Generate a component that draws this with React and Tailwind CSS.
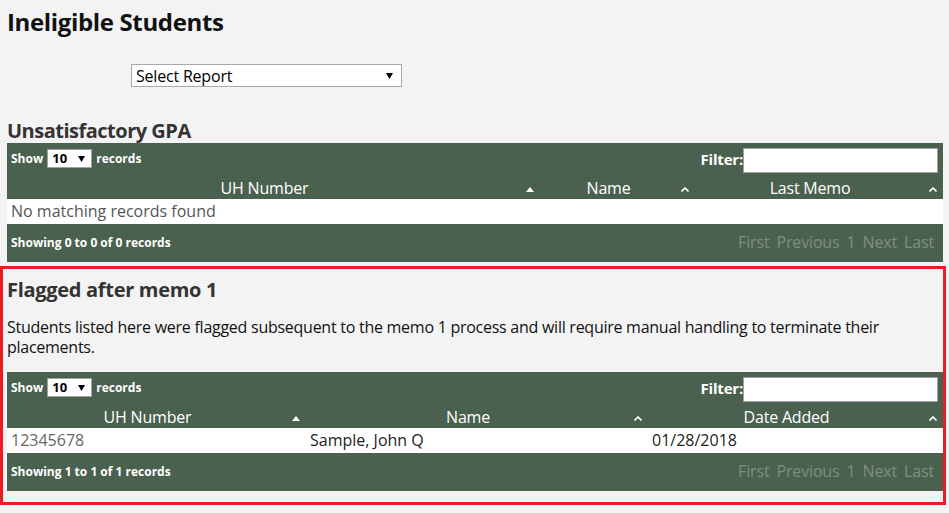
import React from "react";

const GREEN = "bg-[#4b6150]";

// --- small drawings ---
function SortUp() {
    return (
        <svg width="8" height="5" viewBox="0 0 8 5" className="block">
            <path d="M0 5 L4 0 L8 5 Z" fill="#fff" />
        </svg>
    );
}

function SortBoth() {
    return (
        <svg width="8" height="5" viewBox="0 0 8 5" className="block">
            <path d="M0.5 4.5 L4 1 L7.5 4.5" fill="none" stroke="#fff" strokeWidth="1.6" />
        </svg>
    );
}

function DownArrow() {
    return (
        <svg width="7" height="6" viewBox="0 0 7 6" className="block">
            <path d="M0 0 L7 0 L3.5 6 Z" fill="#000" />
        </svg>
    );
}

// --- Data table block ---
function DataTable({ cols, template, rows, empty, info }) {
    return (
        <div className={`${GREEN} w-[936px] text-white`}>
            {/* toolbar */}
            <div className="h-[34px] flex items-start justify-between pl-[4px] pr-[5px]">
                <div className="flex items-center gap-[4px] h-[31px] text-[12px] font-bold">
                    <span>Show</span>
                    <div className="w-[45px] h-[19px] bg-white border border-[#a0a0a0] text-black flex items-center justify-between pl-[4px] pr-[6px] text-[13px] font-bold">
                        <span>10</span>
                        <DownArrow />
                    </div>
                    <span>records</span>
                </div>
                <div className="flex items-center h-[34px] pt-[1px]">
                    <span className="text-[15px] font-bold tracking-[-0.2px] -translate-y-[1px]">Filter:</span>
                    <div className="w-[195px] h-[25px] bg-white border border-[#a0a0a0]" />
                </div>
            </div>

            {/* header */}
            <div className="grid h-[22px]" style={{ gridTemplateColumns: template }}>
                {cols.map((c, i) => (
                    <div key={c} className="relative flex items-center justify-center pr-[18px] text-[16px] leading-[22px] tracking-[-0.2px]">
                        <span>{c}</span>
                        <span className="absolute right-[6px] top-[10px]">
                            {i === 0 ? <SortUp /> : <SortBoth />}
                        </span>
                    </div>
                ))}
            </div>

            {/* body */}
            <div className="bg-white h-[25px] text-[16px] leading-[25px]">
                {empty ? (
                    <div className="pl-[4px] text-[#555]">No matching records found</div>
                ) : (
                    rows.map((r, ri) => (
                        <div key={ri} className="grid" style={{ gridTemplateColumns: template }}>
                            {r.map((cell, ci) => (
                                <div key={ci} className={`pl-[4px] ${ci === 0 ? "text-[#666]" : "text-[#222]"}`}>{cell}</div>
                            ))}
                        </div>
                    ))
                )}
            </div>

            {/* footer */}
            <div className="h-[38px] flex items-center justify-between pl-[4px] pr-[9px]">
                <span className="text-[12px] font-bold">{info}</span>
                <div className="flex gap-[7px] text-[16px] text-[#7d8f80] tracking-[-0.15px] -translate-y-[1px]">
                    <span>First</span>
                    <span>Previous</span>
                    <span>1</span>
                    <span>Next</span>
                    <span>Last</span>
                </div>
            </div>
        </div>
    );
}

export default function App() {
    return (
        <div className="min-h-[513px] w-[949px] bg-[#f3f3f3] font-['Open_Sans',sans-serif] overflow-hidden">
            <div className="pl-[7px]">
                <h1 className="pt-[8px] text-[24px] leading-[28px] font-bold text-[#111] tracking-[-0.35px]">Ineligible Students</h1>

                <div className="mt-[28px] ml-[124px] w-[271px] h-[23px] bg-white border border-[#a9a9a9] flex items-center justify-between pl-[4px] pr-[8px] text-[16px] text-black tracking-[-0.2px]">
                    <span>Select Report</span>
                    <DownArrow />
                </div>

                <h2 className="mt-[32px] text-[20px] leading-[24px] font-bold text-[#333] tracking-[-0.5px]">Unsatisfactory GPA</h2>

                <DataTable
                    cols={["UH Number", "Name", "Last Memo"]}
                    template="533px 155px 1fr"
                    empty
                    info="Showing 0 to 0 of 0 records"
                />
            </div>

            {/* highlighted section */}
            <div className="mt-[4px] w-[946px] border-[3px] border-[#ec1c24] pl-[4px] pb-[11px]">
                <h2 className="pt-[9px] text-[20px] leading-[24px] font-bold text-[#333] tracking-[-0.3px]">Flagged after memo 1</h2>
                <p className="mt-[15px] text-[16px] leading-[20px] text-[#111] tracking-[-0.26px] pr-[40px]">
                    Students listed here were flagged subsequent to the memo 1 process and will require manual handling to terminate their placements.
                </p>
                <div className="mt-[15px]">
                    <DataTable
                        cols={["UH Number", "Name", "Date Added"]}
                        template="299px 342px 1fr"
                        rows={[["12345678", "Sample, John Q", "01/28/2018"]]}
                        info="Showing 1 to 1 of 1 records"
                    />
                </div>
            </div>
        </div>
    );
}
